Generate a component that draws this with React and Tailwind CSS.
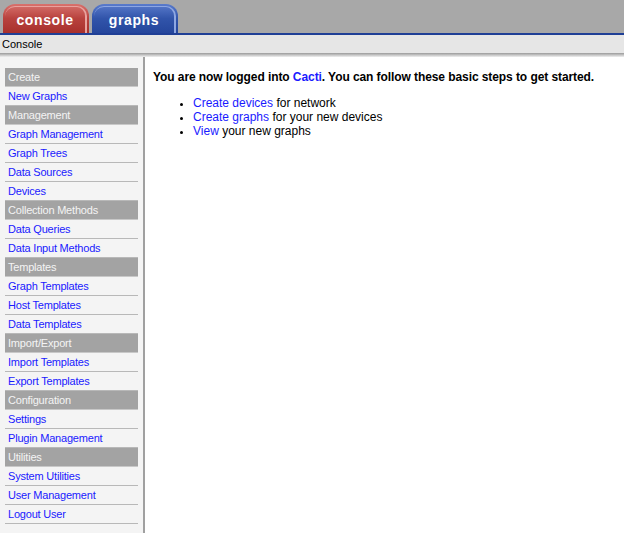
import React from "react";

const menu = [
  { header: "Create", items: ["New Graphs"] },
  { header: "Management", items: ["Graph Management", "Graph Trees", "Data Sources", "Devices"] },
  { header: "Collection Methods", items: ["Data Queries", "Data Input Methods"] },
  { header: "Templates", items: ["Graph Templates", "Host Templates", "Data Templates"] },
  { header: "Import/Export", items: ["Import Templates", "Export Templates"] },
  { header: "Configuration", items: ["Settings", "Plugin Management"] },
  { header: "Utilities", items: ["System Utilities", "User Management", "Logout User"] },
];

function Tab({ label, red }) {
  // tab picture: rounded top, light inner edge
  const body = red
    ? "bg-gradient-to-b from-[#d8716d] via-[#b8423e] to-[#a8302c]"
    : "bg-gradient-to-b from-[#5a7bcc] via-[#3154aa] to-[#25469c]";
  const edge = red ? "border-[#e8a29e]" : "border-[#8ea7e2]";
  return (
    <div className={`h-[29px] w-[86px] rounded-t-[12px] ${body} p-[2px] pb-0`}>
      <div className={`flex h-full items-center justify-center rounded-t-[10px] border-t border-r-2 ${edge}`}>
        <span className="text-[14px] font-bold tracking-[0.6px] text-white">{label}</span>
      </div>
    </div>
  );
}

export default function App() {
  return (
    <div className="flex h-[533px] w-[624px] flex-col overflow-hidden bg-white font-['Liberation_Sans',Arial,sans-serif]">
      {/* tabs */}
      <div className="flex h-[33px] shrink-0 items-end gap-[3px] bg-[#a8a8a8] pl-[3px]">
        <Tab label="console" red />
        <Tab label="graphs" />
      </div>
      <div className="h-[2px] shrink-0 bg-[#1f3f96]" />

      {/* breadcrumb */}
      <div className="flex h-[18px] shrink-0 items-center bg-[#e6e6e6] pl-[2px] text-[11px] text-black">
        Console
      </div>
      <div className="h-[4px] shrink-0 bg-gradient-to-b from-[#9a9a9a] to-[#f0f0f0]" />

      <div className="flex min-h-0 flex-1">
        {/* side menu */}
        <div className="w-[145px] shrink-0 border-r-2 border-[#a0a0a0] bg-[#f4f4f4] pl-[5px] pr-[5px] pt-[11px] tracking-[-0.2px]">
          {menu.map((g) => (
            <div key={g.header}>
              <div className="flex h-[19px] items-center border-b border-[#c8c8c8] bg-[#a3a3a3] pl-[3px] text-[11px] text-[#f4f4f4]">
                {g.header}
              </div>
              {g.items.map((it) => (
                <div
                  key={it}
                  className="flex h-[19px] items-center border-b border-[#b8b8b8] pl-[3px] text-[11px] text-[#1a1aff]"
                >
                  {it}
                </div>
              ))}
            </div>
          ))}
        </div>

        {/* main */}
        <div className="flex-1 pl-[8px] pt-[12px] text-[12px] text-black">
          <p className="font-bold leading-[16px] tracking-[-0.08px]">
            You are now logged into <span className="text-[#1a1aff]">Cacti</span>. You can follow these basic steps to get started.
          </p>
          <ul className="mt-[11px] list-disc pl-[40px] leading-[14px] marker:text-[11px]">
            <li>
              <span className="text-[#1a1aff]">Create devices</span> for network
            </li>
            <li>
              <span className="text-[#1a1aff]">Create graphs</span> for your new devices
            </li>
            <li>
              <span className="text-[#1a1aff]">View</span> your new graphs
            </li>
          </ul>
        </div>
      </div>
    </div>
  );
}
